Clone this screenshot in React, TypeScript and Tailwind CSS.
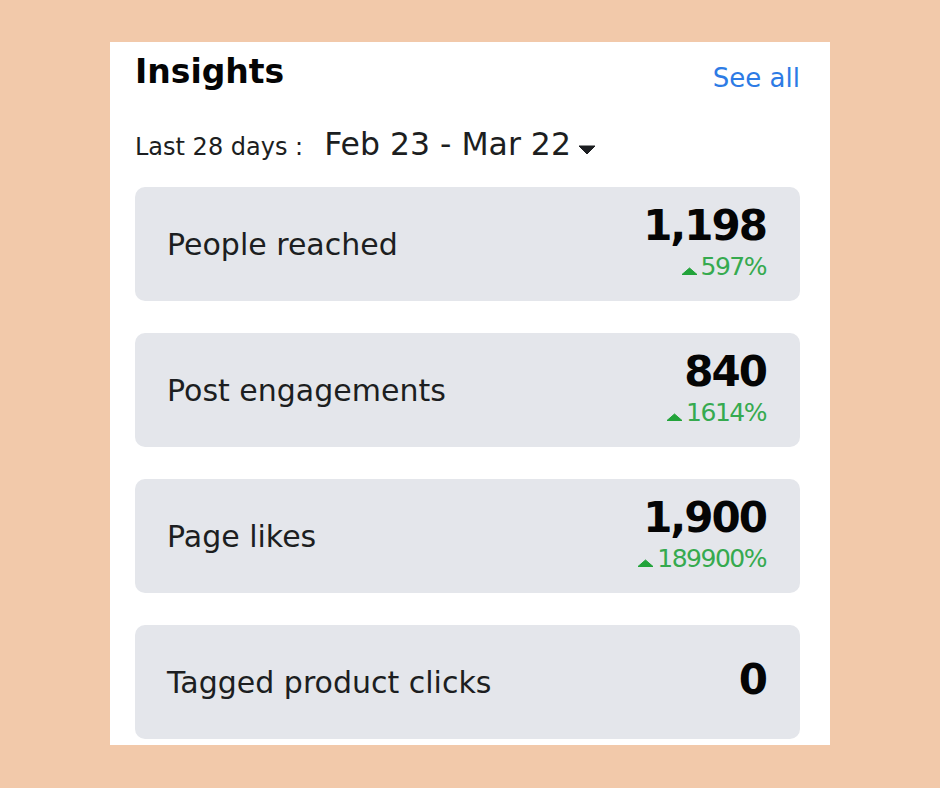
import React from "react";

const stats = [
  { id: 1, label: "People reached", value: "1,198", change: "597%" },
  { id: 2, label: "Post engagements", value: "840", change: "1614%" },
  { id: 3, label: "Page likes", value: "1,900", change: "189900%" },
  { id: 4, label: "Tagged product clicks", value: "0", change: "" },
];

const Caret = () => (
  <svg width="18" height="10" viewBox="0 0 18 10" className="ml-[7px] mb-[2px]">
    <path d="M1 1 L17 1 L9 9 Z" fill="#1c1e21" stroke="#1c1e21" strokeLinejoin="round" />
  </svg>
);

const UpArrow = () => (
  <svg width="17" height="8" viewBox="0 0 17 8" className="mr-[3px] mb-[5px]">
    <path d="M1 7.5 L16 7.5 L8.5 1 Z" fill="#22a33a" stroke="#22a33a" strokeLinejoin="round" />
  </svg>
);

export default function App() {
  return (
    <div
      className="w-[940px] h-[788px] bg-[#f2c9aa] pt-[42px] pl-[110px]"
      style={{ fontFamily: '"DejaVu Sans", "Noto Sans", sans-serif' }}
    >
      <div className="w-[720px] h-[703px] bg-white pl-[25px] pr-[30px] overflow-hidden">
        <div className="flex justify-between items-start pt-[10px]">
          <span className="text-[33px] leading-[40px] font-bold text-[#050505]">Insights</span>
          <span className="text-[26px] leading-[40px] mt-[6px] text-[#2d7be5]">See all</span>
        </div>
        <div className="flex items-baseline mt-[28px] h-[36px] text-[#1c1e21]">
          <span className="text-[24px] leading-[36px]">Last 28 days :</span>
          <span className="text-[31.5px] leading-[36px] ml-[21px]">Feb 23 - Mar 22</span>
          <Caret />
        </div>
        <div className="flex flex-col gap-[32px] mt-[25px]">
          {stats.map((item) => (
            <div
              key={item.id}
              className="h-[114px] rounded-[10px] bg-[#e4e6eb] flex items-center justify-between pl-[32px] pr-[34px]"
            >
              <span className="text-[30px] text-[#1c1e21]">{item.label}</span>
              <div className="flex flex-col items-end pb-[4px]">
                <span className="text-[42px] leading-[46px] font-bold tracking-[-2px] text-[#050505]">
                  {item.value}
                </span>
                {item.change && (
                  <span className="flex items-baseline mt-[4px] text-[25px] leading-[28px] tracking-[-1.5px] text-[#36aa4f]">
                    <UpArrow />
                    {item.change}
                  </span>
                )}
              </div>
            </div>
          ))}
        </div>
      </div>
    </div>
  );
}
